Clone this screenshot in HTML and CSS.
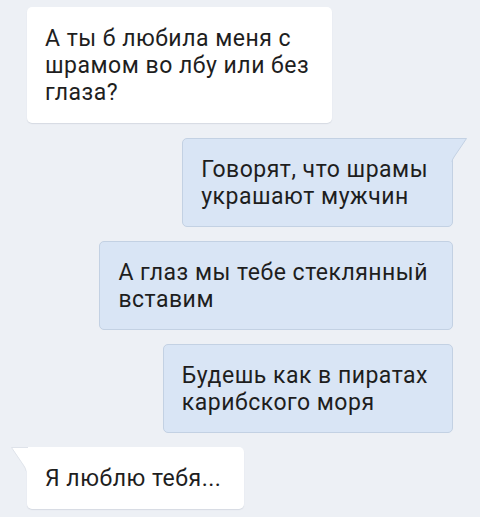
FILE: index.html
```html
<!DOCTYPE html>
<html lang="ru">
<head>
    <meta charset="UTF-8">
    <title>Диалог</title>
    <link rel="stylesheet" href="styles.css">
</head>
<body>
    <div class="chat">
        <div class="msg in top">
            А ты б любила меня с<br>шрамом во лбу или без<br>глаза?
        </div>
        <div class="msg out first">
            <svg class="tail" width="17" height="24" viewBox="0 0 17 24">
                <path d="M0 0.5 H15.5 L3 19 Q1 22 1 24 H0 Z" fill="#d9e5f5"/>
                <path d="M0 0.5 H15.5 L3 19 Q1 22 1 24" fill="none" stroke="#c3d1e3" stroke-width="1"/>
            </svg>
            Говорят, что шрамы<br>украшают мужчин
        </div>
        <div class="msg out">
            А глаз мы тебе стеклянный<br>вставим
        </div>
        <div class="msg out">
            Будешь как в пиратах<br>карибского моря
        </div>
        <div class="msg in first">
            <svg class="tail" width="18" height="24" viewBox="0 0 18 24">
                <path d="M18 0.5 H1.5 L14 19 Q16 22 16 24 H18 Z" fill="#ffffff"/>
                <path d="M18 0.5 H1.5 L14 19 Q16 22 16 24" fill="none" stroke="#dfe3ea" stroke-width="1"/>
            </svg>
            Я люблю тебя...
        </div>
    </div>
</body>
</html>
```

FILE: styles.css
```css
body {
    margin: 0;
    background: #edf0f5;
    font-family: Roboto, "Noto Sans", sans-serif;
}
.chat {
    display: flex;
    flex-direction: column;
    gap: 14px;
    padding: 7px 27px 10px;
}
.msg {
    position: relative;
    width: fit-content;
    padding: 18px 23px 17px 18px;
    font-size: 23px;
    letter-spacing: 0.5px;
    line-height: 27px;
    color: #1e1e1e;
    border-radius: 5px;
}
.msg.top {
    margin-bottom: 1px;
}
.msg.in {
    align-self: flex-start;
    background: #fff;
    box-shadow: 0 1px 1px rgba(40, 60, 90, 0.12);
}
.msg.out {
    align-self: flex-end;
    background: #d9e5f5;
    border: 1px solid #c3d1e3;
    padding: 17px 24px 16px 18px;
}
.msg.first.out {
    border-top-right-radius: 0;
}
.msg.first.in {
    border-top-left-radius: 0;
}
.tail {
    position: absolute;
    top: -1px;
}
.out .tail {
    right: -16px;
}
.in .tail {
    top: 0;
    left: -17px;
}
```
